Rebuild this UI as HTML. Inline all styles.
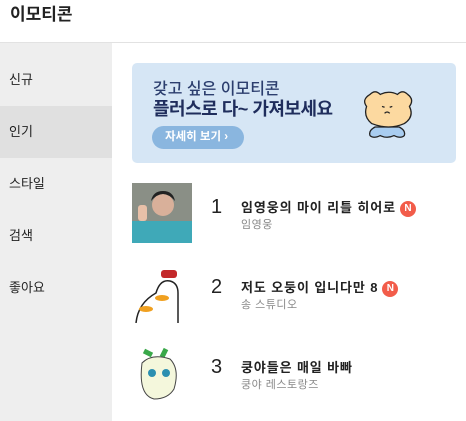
<!DOCTYPE html>
<html><head><meta charset="utf-8"><style>
*{margin:0;padding:0;box-sizing:border-box}
body{width:466px;height:421px;overflow:hidden;background:#fff;font-family:"Liberation Sans","Noto Sans CJK KR",sans-serif;position:relative}
.hdr{position:absolute;left:0;top:0;width:466px;height:43px;border-bottom:1px solid #e2e2e2}
.hdr h1{position:absolute;left:10px;top:0px;font-size:17px;font-weight:bold;color:#222}
.side{position:absolute;left:0;top:43px;width:112px;height:378px;background:#eeeeee;padding-top:11px}
.side div{height:52px;line-height:52px;padding-left:9px;font-size:13px;color:#222}
.side .sel{background:#e0e0e0}
.ban{position:absolute;left:132px;top:63px;width:324px;height:100px;background:#d6e6f5;border-radius:5px}
.t1{position:absolute;left:21px;top:12px;font-size:16px;color:#2c3e6e;font-weight:500}
.t2{position:absolute;left:21px;top:32px;font-size:18px;color:#1f2d5c;font-weight:bold;letter-spacing:-0.5px}
.btn{position:absolute;left:20px;top:63px;width:92px;height:23px;border-radius:12px;background:#8ab6df;color:#fff;font-size:11.5px;font-weight:bold;line-height:23px;padding-left:13px}
.item{position:absolute;left:132px;width:330px;height:60px}
.num{position:absolute;left:79px;top:13px;font-size:20px;color:#222}
.tt{position:absolute;left:109px;top:14px;font-size:13px;font-weight:bold;color:#222;white-space:nowrap;letter-spacing:0.9px}
.st{position:absolute;left:109px;top:33px;font-size:11px;color:#888;letter-spacing:0.5px}
.n{display:inline-block;width:16px;height:16px;border-radius:50%;background:#f25c4a;color:#fff;font-size:10px;text-align:center;line-height:16px;margin-left:4px;vertical-align:1px;letter-spacing:0}
</style></head><body>
<div class="hdr"><h1>이모티콘</h1></div>
<div class="side"><div>신규</div><div class="sel">인기</div><div>스타일</div><div>검색</div><div>좋아요</div></div>
<div class="ban">
<div class="t1">갖고 싶은 이모티콘</div>
<div class="t2">플러스로 다~ 가져보세요</div>
<div class="btn">자세히 보기 ›</div>
<svg style="position:absolute;left:226px;top:24px" width="60" height="56" viewBox="0 0 70 60">
<path d="M20 44 q-8 4 -6 10 q4 4 12 0 q8 4 16 0 q8 4 12 0 q2-6 -6-10z" fill="#a9cdf0" stroke="#222" stroke-width="1.5"/>
<path d="M10 20 q-6 -8 4 -14 q6 -6 12 0 q10 -5 20 0 q6 -6 12 0 q8 6 2 14 q6 12 -6 20 q-18 8 -38 0 q-10 -8 -6 -20z" fill="#fcd9a0" stroke="#222" stroke-width="1.5"/>
<path d="M28 20 l3 1 M40 20 l-3 1 M31 28 q3 -3 6 0" stroke="#222" stroke-width="1.5" fill="none"/>
</svg>
</div>
<div class="item" style="top:183px">
<svg width="60" height="60"><rect width="60" height="60" fill="#8a8f86"/><rect y="38" width="60" height="22" fill="#3fa9b8"/><circle cx="31" cy="22" r="11" fill="#d9b09a"/><path d="M19 18 q12-14 24 0 q-2-10-12-10 q-10 0-12 10z" fill="#222"/><rect x="6" y="22" width="9" height="16" rx="3" fill="#e8c0a8"/></svg>
<div class="num">1</div><div class="tt">임영웅의 마이 리틀 히어로<span class="n">N</span></div><div class="st">임영웅</div></div>
<div class="item" style="top:263px">
<svg width="60" height="60"><path d="M4 60 q2-20 20-30 q4-14 14-12 q8 2 8 12 l0 30" fill="#fff" stroke="#222" stroke-width="1.5"/><rect x="29" y="7" width="16" height="8" rx="3" fill="#c3282a"/><ellipse cx="14" cy="46" rx="7" ry="3" fill="#f0a020"/><ellipse cx="30" cy="35" rx="7" ry="3" fill="#f0a020"/></svg>
<div class="num">2</div><div class="tt">저도 오둥이 입니다만 8<span class="n">N</span></div><div class="st">송 스튜디오</div></div>
<div class="item" style="top:343px">
<svg width="60" height="60"><path d="M12 8 l8 4 M34 6 l-4 8" stroke="#3aa84a" stroke-width="5"/><path d="M10 20 q10-10 28 -4 q10 10 4 30 q-6 10 -20 10 q-16 -4 -12 -36z" fill="#f4f7dc" stroke="#444"/><circle cx="20" cy="30" r="4" fill="#2b8fb0"/><circle cx="34" cy="30" r="4" fill="#2b8fb0"/></svg>
<div class="num">3</div><div class="tt">쿵야들은 매일 바빠</div><div class="st">쿵야 레스토랑즈</div></div>
</body></html>
